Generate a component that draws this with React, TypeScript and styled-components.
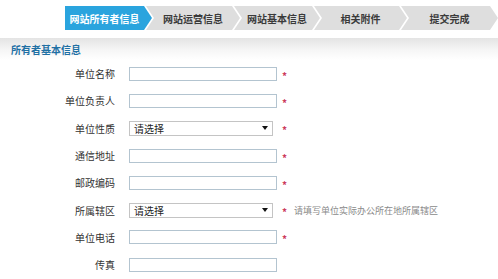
import { createGlobalStyle, styled } from "styled-components";

const GlobalStyle = createGlobalStyle`
  html, body {
    margin: 0;
    padding: 0;
    background: #fff;
    font-family: "Noto Sans CJK SC", "Noto Sans", sans-serif;
  }
`;

const Page = styled.div`
  width: 498px;
  height: 279px;
  overflow: hidden;
  background: #fff;
`;

const StepBar = styled.div`
  display: flex;
  padding: 6px 0 0 65px;
  height: 24px;
`;

const Step = styled.div<{ $active?: boolean; $first?: boolean; $w: number }>`
  width: ${(p) => p.$w}px;
  height: 24px;
  margin-left: ${(p) => (p.$first ? 0 : -6)}px;
  padding-left: ${(p) => (p.$first ? 0 : 8)}px;
  padding-right: 8px;
  box-sizing: border-box;
  display: flex;
  align-items: center;
  justify-content: center;
  font-size: 10px;
  font-weight: bold;
  color: ${(p) => (p.$active ? "#fff" : "#3a3a3a")};
  background: ${(p) => (p.$active ? "#2aa4de" : "#dedede")};
  clip-path: ${(p) =>
    p.$first
      ? "polygon(0 0, calc(100% - 8px) 0, 100% 50%, calc(100% - 8px) 100%, 0 100%)"
      : "polygon(0 0, calc(100% - 8px) 0, 100% 50%, calc(100% - 8px) 100%, 0 100%, 8px 50%)"};
`;

const SectionHead = styled.div`
  margin-top: 8px;
  height: 22px;
  padding-left: 11px;
  display: flex;
  align-items: center;
  font-size: 10px;
  font-weight: bold;
  color: #1f70a4;
  background: linear-gradient(#e4e4e4, #f6f6f6 55%, #fff);
`;

const Form = styled.div`
  padding-top: 0;
`;

const Row = styled.div`
  display: flex;
  align-items: center;
  height: 27.3px;
`;

const Label = styled.div`
  width: 122px;
  text-align: right;
  font-size: 10px;
  color: #333;
  padding-right: 7px;
  box-sizing: border-box;
  flex-shrink: 0;
`;

const TextBox = styled.div`
  width: 148px;
  height: 14px;
  box-sizing: border-box;
  border: 1px solid #b3c4d0;
  background: #fff;
  margin-left: 7px;
`;

const SelectBox = styled.div`
  width: 144px;
  height: 15px;
  box-sizing: border-box;
  border: 1px solid #c4c4c4;
  margin-left: 7px;
  display: flex;
  align-items: center;
  justify-content: space-between;
  padding: 0 4px 0 4px;
  font-size: 10px;
  color: #222;
`;

const Caret = styled.span`
  width: 0;
  height: 0;
  border-left: 3px solid transparent;
  border-right: 3px solid transparent;
  border-top: 4px solid #111;
`;

const Star = styled.span<{ $gap: number }>`
  margin-left: ${(p) => p.$gap}px;
  color: #cc3a5c;
  font-size: 10px;
  font-weight: bold;
  line-height: 10px;
  padding-top: 4px;
`;

const Hint = styled.span`
  margin-left: 7px;
  font-size: 9px;
  color: #8a8a8a;
  white-space: nowrap;
`;

const steps = [
  { text: "网站所有者信息", w: 87 },
  { text: "网站运营信息", w: 94 },
  { text: "网站基本信息", w: 86 },
  { text: "相关附件", w: 93 },
  { text: "提交完成", w: 97 },
];

type Field = { label: string; kind: "text" | "select"; required: boolean; hint?: string };

const fields: Field[] = [
  { label: "单位名称", kind: "text", required: true },
  { label: "单位负责人", kind: "text", required: true },
  { label: "单位性质", kind: "select", required: true },
  { label: "通信地址", kind: "text", required: true },
  { label: "邮政编码", kind: "text", required: true },
  { label: "所属辖区", kind: "select", required: true, hint: "请填写单位实际办公所在地所属辖区" },
  { label: "单位电话", kind: "text", required: true },
  { label: "传真", kind: "text", required: false },
];

export default function App() {
  return (
    <Page>
      <GlobalStyle />
      <StepBar>
        {steps.map((s, i) => (
          <Step key={s.text} $w={s.w} $first={i === 0} $active={i === 0}>
            {s.text}
          </Step>
        ))}
      </StepBar>
      <SectionHead>所有者基本信息</SectionHead>
      <Form>
        {fields.map((f) => (
          <Row key={f.label}>
            <Label>{f.label}</Label>
            {f.kind === "text" ? (
              <TextBox />
            ) : (
              <SelectBox>
                请选择
                <Caret />
              </SelectBox>
            )}
            {f.required && <Star $gap={f.kind === "text" ? 5 : 9}>*</Star>}
            {f.hint && <Hint>{f.hint}</Hint>}
          </Row>
        ))}
      </Form>
    </Page>
  );
}
